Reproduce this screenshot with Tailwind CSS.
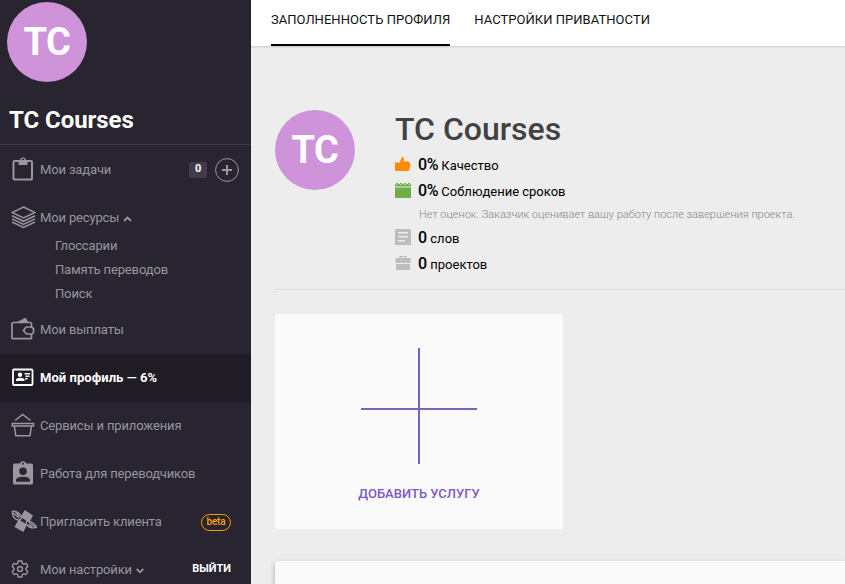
<!DOCTYPE html>
<html lang="ru">
<head>
<meta charset="utf-8">
<title>TC Courses</title>
<script src="https://cdn.jsdelivr.net/npm/@tailwindcss/browser@4"></script>
</head>
<body class="flex h-[584px] w-[845px] overflow-hidden bg-[#ededed] font-[Roboto,sans-serif] text-[13px]">
<aside class="flex h-[584px] w-[251px] shrink-0 flex-col overflow-hidden bg-[#282430] font-normal text-[#99969d]">
  <header class="h-[145px] shrink-0 border-b border-[#403c49] pt-[2px]">
    <div class="ml-[7px] flex size-20 items-center justify-center rounded-full bg-[#ce93d8] text-[38px] font-bold tracking-[-0.4px] text-white">TC</div>
    <h1 class="mt-[22px] ml-[9px] text-2xl leading-[32px] font-bold tracking-[-0.06px] text-white">TC Courses</h1>
  </header>
  <nav class="flex flex-col tracking-[-0.15px]">
    <a class="flex h-[49px] items-center pl-[11px]">
      <svg class="-mt-[2px] mr-[5px] size-6" viewBox="0 0 24 24" fill="none"><path d="M3.500 4H20Q21 4 21 5V21.500Q21 22.500 20 22.500H3.500Q2.500 22.500 2.500 21.500V5Q2.500 4 3.500 4Z" stroke="currentColor" stroke-width="2"/><path fill="currentColor" fill-rule="evenodd" d="M7.500 3.500h1.600a2.900 2.900 0 0 1 5.800 0h1.600V8h-9ZM12 1.800a1.400 1.400 0 1 0 0 2.800A1.400 1.400 0 0 0 12 1.800Z"/></svg>
      <span>Мои задачи</span>
      <span class="ml-auto flex h-4 w-[18px] items-center justify-center rounded-[2px] bg-[#403c49] text-[11px] font-bold text-white">0</span>
      <svg class="mr-3 ml-2 size-6" viewBox="0 0 24 24" fill="none" stroke="currentColor"><circle cx="12" cy="12" r="11.400"/><path stroke-width="2" d="M12 7v10M7 12h10"/></svg>
    </a>
    <a class="flex h-[47px] items-center pl-[11px]">
      <svg class="-mt-[2px] mr-[4px] h-6 w-[25px]" viewBox="0 0 25 24" fill="none" stroke="currentColor" stroke-width="1.500"><path d="M12.500 2 24 7.500 12.500 13 1 7.500ZM1 10.800l11.500 5.500L24 10.800M1 13.900l11.500 5.500L24 13.900M1 17l11.500 5.500L24 17"/></svg>
      <span>Мои ресурсы</span>
      <svg class="mt-[3px] ml-[4px] h-[6px] w-[9px]" viewBox="0 0 9 6" fill="none" stroke="currentColor" stroke-width="1.800"><path d="M1 5 4.500 1.500 8 5"/></svg>
    </a>
    <div class="flex h-[64px] flex-col pl-[55px] leading-6">
      <span class="-mt-[7px]">Глоссарии</span><span>Память переводов</span><span>Поиск</span>
    </div>
    <a class="flex h-[49px] items-center pl-[11px]">
      <svg class="-mt-[2px] mr-[5px] size-6" viewBox="0 0 24 24" fill="none"><path fill="currentColor" d="M5 5.500 14.500.800 17.500 5.500Z"/><path stroke="currentColor" stroke-width="1.700" d="M20.500 10V6.500L19.500 5.500H2L1 6.500V21l.800.700H20l.500-.700V17M15 10h5.500L22.500 11.500v4L21 17h-5.500L12.500 13.500Z"/></svg>
      <span>Мои выплаты</span>
    </a>
    <a class="flex h-[48px] items-center bg-[#1f1c25] pl-[11px] font-bold tracking-[0.05px] text-white">
      <svg class="-mt-[2px] mr-[5px] size-6" viewBox="0 0 24 24" fill="none"><rect x="2" y="4.500" width="19.500" height="15.500" rx="1" stroke="currentColor" stroke-width="1.800"/><g fill="currentColor"><circle cx="9" cy="9.800" r="2.200"/><path d="M5 16v-1c0-3 8.500-3 8.500 0v1ZM13.500 8h5.500v1.400h-5.500ZM14.500 10.500h4v1.400h-4ZM14 13h2.500v1.400H14Z"/></g></svg>
      <span>Мой профиль — 6%</span>
    </a>
    <a class="flex h-[48px] items-center pl-[11px]">
      <svg class="-mt-[2px] mr-[5px] size-6" viewBox="0 0 24 24" fill="none" stroke="currentColor" stroke-width="1.500"><path d="M4 7.500 11.700 1.500 19.500 7.500M1.300 10.500h21.200v2.500H1.300ZM3.300 13l1.500 9.700h14.200l1.500-9.700"/></svg>
      <span>Сервисы и приложения</span>
    </a>
    <a class="flex h-[48px] items-center pl-[11px]">
      <svg class="-mt-[2px] mr-[5px] size-6" viewBox="0 0 24 24"><path fill="currentColor" fill-rule="evenodd" d="M3.500 2.500h5.300a3.400 3.400 0 0 1 6.400 0h5.300Q22 2.500 22 4v18Q22 23.500 20.500 23.500h-17Q2 23.500 2 22V4Q2 2.500 3.500 2.500ZM12 1.800a1 1 0 1 0 0 2 1 1 0 0 0 0-2ZM12 6.500a3.800 3.800 0 1 0 0 7.600 3.800 3.800 0 0 0 0-7.600ZM5 20.800h14V19c0-4.500-14-4.500-14 0Z"/></svg>
      <span>Работа для переводчиков</span>
    </a>
    <a class="flex h-[48px] items-center pl-[11px]">
      <svg class="-mt-[2px] mr-[2px] h-6 w-[27px]" viewBox="0 0 27 24"><g fill="currentColor"><path d="m13.800 1 8.200 5.500-3.800 7-8.700-5.500Z"/><path d="m7.500 10.500 8.500 5-3.500 7.500L3.500 18Z"/></g><g fill="none" stroke="currentColor" stroke-width="1.400"><path d="M1.200 2.500c3-.8 7.300 1 8.800 4.500.5 2 0 3.500-1 4C5 11.500 1.200 8.500 1.200 2.500Zm1 1.500 6 5M4.500 3l4 4.500M16 12c3-.5 8 2.500 9.500 6-3 1.500-7 1-9-1.500-1.500-2-1.500-4-.5-4.500Zm2 1.500 6 4M17.500 15.500l4 2.300"/></g></svg>
      <span>Пригласить клиента</span>
      <span class="mr-5 ml-auto flex h-[17px] w-[30px] items-center justify-center rounded-full border border-[#ffa000] pb-[2px] text-[10px] font-medium text-[#ffa000]">beta</span>
    </a>
    <a class="flex h-[38px] items-center pt-[9px] pl-[11px]">
      <svg class="-mt-[2px] mr-[11px] size-[18px]" viewBox="0 0 18 18" fill="none" stroke="currentColor" stroke-width="1.400" stroke-linejoin="round"><path d="M7.200 1h3.600l.5 2.300 1.500.9 2.300-.8 1.700 3L15 8.200v1.600l1.800 1.700-1.700 3-2.300-.7-1.500.8-.5 2.400H7.200l-.5-2.400-1.500-.8-2.300.7-1.700-3L3 9.800V8.200L1.200 6.400l1.700-3 2.300.8 1.500-.9Z"/><circle cx="9" cy="9" r="2.500"/></svg>
      <span>Мои настройки</span>
      <svg class="mt-[3px] ml-[4px] h-[6px] w-[8px]" viewBox="0 0 8 6" fill="none" stroke="currentColor" stroke-width="1.800"><path d="M.7 1 4 4.300 7.300 1"/></svg>
      <span class="mr-5 ml-auto text-[11px] font-bold tracking-normal text-white">ВЫЙТИ</span>
    </a>
  </nav>
</aside>
<main class="flex min-w-0 flex-1 flex-col">
  <nav class="z-1 flex h-[46px] shrink-0 gap-6 bg-white pl-5 text-[13px] leading-[40px] tracking-[0.04px] text-[#111] shadow-[0_1px_2px_rgba(0,0,0,0.15)]">
    <a class="h-[46px] border-b-2 border-black">ЗАПОЛНЕННОСТЬ ПРОФИЛЯ</a>
    <a>НАСТРОЙКИ ПРИВАТНОСТИ</a>
  </nav>
  <div class="ml-6 flex flex-1 flex-col">
    <section class="flex h-[244px] shrink-0 border-b border-[#dcdcdc] pt-16">
      <div class="mr-10 flex size-20 items-center justify-center rounded-full bg-[#ce93d8] text-[38px] font-bold tracking-[-0.4px] text-white">TC</div>
      <div class="text-[13px] text-black">
        <h2 class="h-[42px] text-[32px] leading-[38px] font-medium text-[#424242]">TC Courses</h2>
        <div class="flex h-[26px] items-center">
          <svg class="-mt-[2px] mr-[7px] size-4" viewBox="0 0 16 16"><path fill="#ff8c00" d="M0 6.500h4.500L7 1Q9.800.200 8.500 5.500h4.500Q15.500 6 15.500 9L14.500 13.500Q14 15 12.500 15H1Q0 15 0 14Z"/></svg>
          <span><b class="text-base font-medium tracking-[-0.4px]">0%</b> Качество</span>
        </div>
        <div class="flex h-[26px] items-center">
          <svg class="-mt-[2px] mr-[7px] size-4" viewBox="0 0 16 16"><path fill="#70ad47" d="M0 5.500h16V16H0Z"/><path fill="#70ad47" d="M0 2h1V1h2v1h2V1h2v1h2V1h2v1h2V1h2v1h1v2.500H0Z"/><path fill="#ededed" d="M1.500 2h1v1h-1Zm4 0h1v1h-1Zm4 0h1v1h-1Zm4 0h1v1h-1Z"/></svg>
          <span><b class="text-base font-medium tracking-[-0.4px]">0%</b> Соблюдение сроков</span>
        </div>
        <p class="ml-6 h-[21px] text-[11px] leading-[22px] font-light text-[#858585]">Нет оценок. Заказчик оценивает вашу работу после завершения проекта.</p>
        <div class="flex h-[26px] items-center">
          <svg class="-mt-[2px] mr-[7px] size-4" viewBox="0 0 16 16"><path fill="#bdbdbd" fill-rule="evenodd" d="M1 0h14l1 1v15H0V1ZM3 3v1.500h10V3Zm0 4v1.500h10V7Zm0 4v1.500h7V11Z"/></svg>
          <span><b class="text-base font-medium">0</b> слов</span>
        </div>
        <div class="flex h-[26px] items-center">
          <svg class="-mt-[2px] mr-[7px] size-4" viewBox="0 0 16 16"><path fill="#bdbdbd" fill-rule="evenodd" d="M4.500 1h7v2H15.500v5H.500V3h4ZM6 2v1h4V2ZM1 9h14v6H1Z"/></svg>
          <span><b class="text-base font-medium">0</b> проектов</span>
        </div>
      </div>
    </section>
    <section class="mt-6 flex h-[215px] w-[288px] shrink-0 flex-col items-center rounded-[2px] bg-[#fafafa] pt-[34px] text-[#7e57c2]">
      <svg class="h-[116px] w-[116px]" viewBox="0 0 116 116" fill="none" stroke="#7e62b8" stroke-width="2"><path d="M58 0v116M0 61h116"/></svg>
      <span class="mt-5 text-[13px] font-medium">ДОБАВИТЬ УСЛУГУ</span>
    </section>
    <section class="mt-8 flex-1 rounded-tl-[2px] bg-[#fafafa] shadow-[0_2px_5px_rgba(0,0,0,0.3)]"></section>
  </div>
</main>
</body>
</html>
